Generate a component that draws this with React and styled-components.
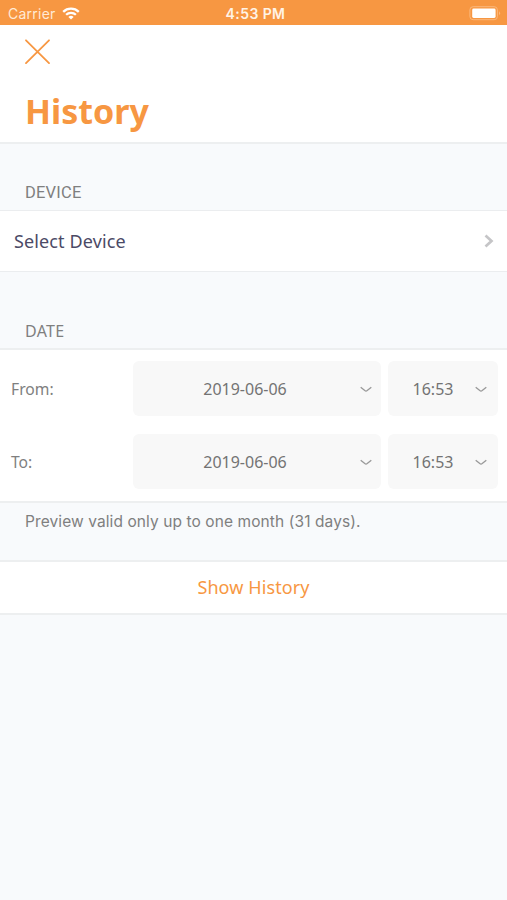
import React from "react";
import styled, { createGlobalStyle, css } from "styled-components";

const orange = "#f79742";

const rows = [
  { id: 1, label: "From:", date: "2019-06-06", time: "16:53" },
  { id: 2, label: "To:", date: "2019-06-06", time: "16:53" },
];

const GlobalStyle = createGlobalStyle`
  * {
    box-sizing: border-box;
  }
  body {
    margin: 0;
    background: #f8fafc;
    font-family: "Noto Sans", sans-serif;
  }
  button {
    margin: 0;
    padding: 0;
    border: 0;
    background: none;
    font-family: inherit;
  }
  svg {
    display: block;
  }
`;

const Screen = styled.div`
  width: 100%;
  min-height: 900px;
  color: #7f7f7f;
`;

const StatusBar = styled.div`
  display: grid;
  grid-template-columns: 1fr auto 1fr;
  align-items: center;
  height: 25px;
  padding: 2px 6px 0 8px;
  background: ${orange};
  color: #fff;
  font-family: Inter, sans-serif;
  font-size: 14px;
  line-height: 22px;
`;

const Carrier = styled.div`
  display: flex;
  align-items: center;
  gap: 6px;
  color: #ffead6;
  letter-spacing: 0.25px;
`;

const Clock = styled.div`
  padding-left: 2px;
  font-size: 14px;
  font-weight: 600;
  color: #fff3e6;
  letter-spacing: 0.4px;
`;

const Battery = styled.div`
  display: flex;
  justify-content: flex-end;
`;

const Header = styled.div`
  height: 119px;
  padding: 14px 25px 0;
  border-bottom: 2px solid #edeff0;
  background: #fff;
`;

const H1 = styled.h1`
  margin: 18px 0 0;
  font-size: 34px;
  font-weight: 700;
  line-height: 48px;
  color: ${orange};
`;

const Label = styled.div`
  display: flex;
  align-items: flex-end;
  height: ${props => props.height}px;
  padding: 0 25px 5px;
  font-family: ${props => props.font || "inherit"};
  font-size: ${props => props.size}px;
  line-height: 24px;
  letter-spacing: ${props => props.spacing}px;
`;

const RowStyles = css`
  width: 100%;
  border-top: 1px solid #ebedef;
  border-bottom: 1px solid #ebedef;
  background: #fff;
`;

const DeviceRow = styled.button`
  ${RowStyles};
  display: flex;
  justify-content: space-between;
  align-items: center;
  height: 62px;
  padding: 0 13px 0 14px;
  font-size: 18px;
  letter-spacing: 0.12px;
  color: #4b4a66;
`;

const DateRows = styled.div`
  ${RowStyles};
  display: flex;
  flex-direction: column;
  gap: 18px;
  height: 155px;
  padding: 11px 9px 0 11px;
  border-width: 2px 0;
  border-color: #edeff0;
`;

const DateRow = styled.div`
  display: grid;
  grid-template-columns: 122px 248px 110px;
  justify-content: start;
  align-items: center;
  height: 55px;
  font-size: 15.7px;

  & > :last-child {
    margin-left: 7px;
  }
  &:last-child span {
    padding-top: 1px;
  }
`;

const Picker = styled.button`
  display: flex;
  align-items: center;
  width: ${props => props.width}px;
  height: 55px;
  padding-right: ${props => props.inset}px;
  border-radius: 6px;
  background: #f8f8f8;
  font-size: 16px;
  color: #737373;

  svg {
    margin-top: 2px;
  }
`;

const Value = styled.span`
  flex: 1;
  padding-right: ${props => props.inset}px;
  padding-left: ${props => props.indent}px;
`;

const Note = styled.div`
  height: 57px;
  padding: 7px 25px 0;
  font-family: Inter, sans-serif;
  font-size: 15.5px;
  line-height: 24px;
  letter-spacing: 0.09px;
`;

const ShowButton = styled.button`
  ${RowStyles};
  display: block;
  height: 55px;
  padding-bottom: 2px;
  border-width: 2px 0;
  border-color: #edeff0;
  font-size: 18px;
  letter-spacing: 0.1px;
  color: ${orange};
`;

const Chevron = () => (
  <svg width="12" height="7" viewBox="0 0 12 7" fill="none" stroke="#999" strokeWidth="1.3">
    <path d="M.7 1.2 4.8 4.6Q6 5.5 7.2 4.6L11.3 1.2" />
  </svg>
);

const App = () => {
  return (
    <Screen>
      <GlobalStyle />
      <StatusBar>
        <Carrier>
          Carrier
          <svg width="18" height="13" viewBox="0 0 18 13" fill="none" stroke="#fff" strokeWidth="2.3">
            <path d="M1.2 4.8a11.2 11.2 0 0 1 15.6 0" />
            <path d="M4.1 7.8a7 7 0 0 1 9.8 0" />
            <path d="M9 12.4 6.4 9.9a3.8 3.8 0 0 1 5.2 0Z" fill="#fff" stroke="none" />
          </svg>
        </Carrier>
        <Clock>4:53 PM</Clock>
        <Battery>
          <svg width="32" height="15" viewBox="0 0 32 15">
            <rect x=".9" y=".7" width="27.5" height="13" rx="3.2" fill="none" stroke="#fbb87c" />
            <rect x="3.2" y="2.5" width="23.4" height="9.4" rx="1.4" fill="#fff" />
            <path d="M30 5.2q2.2 2 0 4Z" fill="#fbb87c" />
          </svg>
        </Battery>
      </StatusBar>

      <Header>
        <button aria-label="Close">
          <svg width="25" height="25" viewBox="0 0 25 25" stroke={orange} strokeWidth="1.8" strokeLinecap="round">
            <path d="M1 1.3 24 24.2M24 1.3 1 24.2" />
          </svg>
        </button>
        <H1>History</H1>
      </Header>

      <Label height={66} size={16.5} spacing={0.2} font="Roboto, sans-serif">DEVICE</Label>
      <DeviceRow>
        Select Device
        <svg width="10" height="14" viewBox="0 0 10 14" fill="none" stroke="#c5c5c7" strokeWidth="2.7">
          <path d="M1.5 1.5 7.5 7 1.5 12.5" />
        </svg>
      </DeviceRow>

      <Label height={76} size={16} spacing={0.3}>DATE</Label>
      <DateRows>
        {rows.map(item => (
          <DateRow key={item.id}>
            <span>{item.label}</span>
            <Picker width={248} inset={9}>
              <Value indent={0} inset={3}>{item.date}</Value>
              <Chevron />
            </Picker>
            <Picker width={110} inset={11}>
              <Value indent={3} inset={0}>{item.time}</Value>
              <Chevron />
            </Picker>
          </DateRow>
        ))}
      </DateRows>

      <Note>Preview valid only up to one month (31 days).</Note>
      <ShowButton>Show History</ShowButton>
    </Screen>
  );
};

export default App;
